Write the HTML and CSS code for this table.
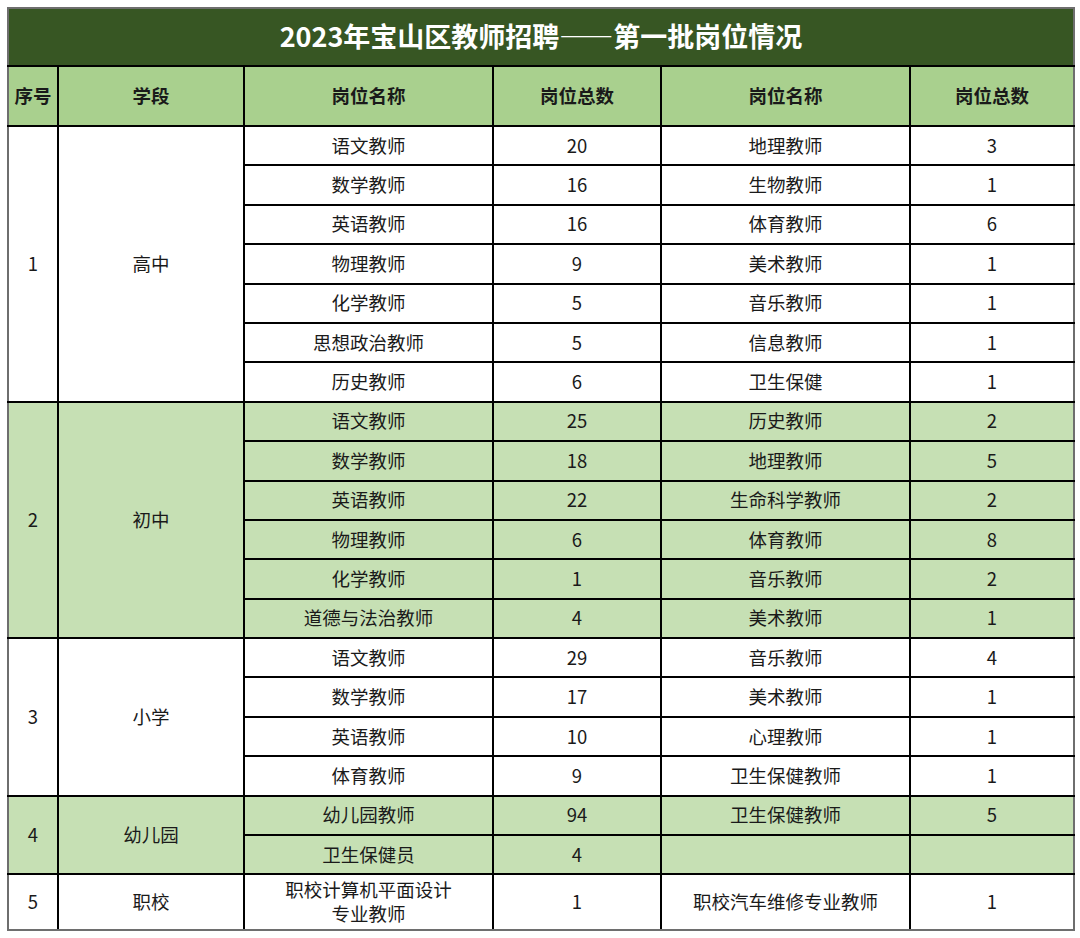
FILE: index.html
```html
<!DOCTYPE html>
<html lang="zh-CN">
<head>
<meta charset="utf-8">
<title>2023年宝山区教师招聘——第一批岗位情况</title>
<link rel="stylesheet" href="styles.css">
</head>
<body>
<table class="sheet">
  <colgroup>
    <col class="w-seq"><col class="w-stage"><col class="w-name"><col class="w-num"><col class="w-name"><col class="w-num2">
  </colgroup>
  <thead>
    <tr class="title-row"><th colspan="6" class="title">2023年宝山区教师招聘——第一批岗位情况</th></tr>
    <tr class="head-row">
      <th class="edge-l">序号</th><th>学段</th><th>岗位名称</th><th>岗位总数</th><th>岗位名称</th><th class="edge-r">岗位总数</th>
    </tr>
  </thead>
  <tbody>
    <tr><td rowspan="7" class="edge-l">1</td><td rowspan="7">高中</td><td>语文教师</td><td>20</td><td>地理教师</td><td class="edge-r">3</td></tr>
    <tr><td>数学教师</td><td>16</td><td>生物教师</td><td class="edge-r">1</td></tr>
    <tr><td>英语教师</td><td>16</td><td>体育教师</td><td class="edge-r">6</td></tr>
    <tr><td>物理教师</td><td>9</td><td>美术教师</td><td class="edge-r">1</td></tr>
    <tr><td>化学教师</td><td>5</td><td>音乐教师</td><td class="edge-r">1</td></tr>
    <tr><td>思想政治教师</td><td>5</td><td>信息教师</td><td class="edge-r">1</td></tr>
    <tr><td>历史教师</td><td>6</td><td>卫生保健</td><td class="edge-r">1</td></tr>

    <tr class="green"><td rowspan="6" class="edge-l">2</td><td rowspan="6">初中</td><td>语文教师</td><td>25</td><td>历史教师</td><td class="edge-r">2</td></tr>
    <tr class="green"><td>数学教师</td><td>18</td><td>地理教师</td><td class="edge-r">5</td></tr>
    <tr class="green"><td>英语教师</td><td>22</td><td>生命科学教师</td><td class="edge-r">2</td></tr>
    <tr class="green"><td>物理教师</td><td>6</td><td>体育教师</td><td class="edge-r">8</td></tr>
    <tr class="green"><td>化学教师</td><td>1</td><td>音乐教师</td><td class="edge-r">2</td></tr>
    <tr class="green"><td>道德与法治教师</td><td>4</td><td>美术教师</td><td class="edge-r">1</td></tr>

    <tr><td rowspan="4" class="edge-l">3</td><td rowspan="4">小学</td><td>语文教师</td><td>29</td><td>音乐教师</td><td class="edge-r">4</td></tr>
    <tr><td>数学教师</td><td>17</td><td>美术教师</td><td class="edge-r">1</td></tr>
    <tr><td>英语教师</td><td>10</td><td>心理教师</td><td class="edge-r">1</td></tr>
    <tr><td>体育教师</td><td>9</td><td>卫生保健教师</td><td class="edge-r">1</td></tr>

    <tr class="green"><td rowspan="2" class="edge-l">4</td><td rowspan="2">幼儿园</td><td>幼儿园教师</td><td>94</td><td>卫生保健教师</td><td class="edge-r">5</td></tr>
    <tr class="green"><td>卫生保健员</td><td>4</td><td></td><td class="edge-r"></td></tr>

    <tr class="tall"><td class="edge-l edge-b">5</td><td class="edge-b">职校</td><td class="edge-b two-line">职校计算机平面设计<br>专业教师</td><td class="edge-b">1</td><td class="edge-b">职校汽车维修专业教师</td><td class="edge-r edge-b">1</td></tr>
  </tbody>
</table>
</body>
</html>
```

FILE: styles.css
```css
html, body {
  margin: 0;
  padding: 0;
  background: #ffffff;
}

body {
  padding: 7px 0 0 7px;
  font-family: "Noto Sans CJK SC", "Noto Sans", sans-serif;
  color: #1a1a1a;
}

.sheet {
  border-collapse: collapse;
  table-layout: fixed;
  width: 1066px;
}

.w-seq { width: 50px; }
.w-stage { width: 186px; }
.w-name { width: 249px; }
.w-num { width: 168px; }
.w-num2 { width: 164px; }

.sheet th,
.sheet td {
  border: 2px solid #000000;
  text-align: center;
  vertical-align: middle;
  padding: 0 0 2px 0;
  font-size: 18.5px;
  line-height: 24px;
}

.title-row { height: 58px; }

.sheet .title {
  background: #375623;
  color: #ffffff;
  font-size: 27px;
  font-weight: 700;
  border-top: 2px solid #6e6e6e;
  border-left: 2px solid #6e6e6e;
  border-right: 2px solid #6e6e6e;
}

.head-row { height: 60px; }

.head-row th {
  background: #a9d08e;
  font-weight: 700;
  color: #1a1a1a;
}

.sheet tbody tr { height: 39.4px; }

.sheet tbody tr.tall { height: 56px; }

.green td { background: #c6e0b4; }

.sheet .edge-l { border-left: 2px solid #6e6e6e; }
.sheet .edge-r { border-right: 2px solid #6e6e6e; }
.sheet .edge-b { border-bottom: 2px solid #6e6e6e; }

.two-line { line-height: 27px; }
```
